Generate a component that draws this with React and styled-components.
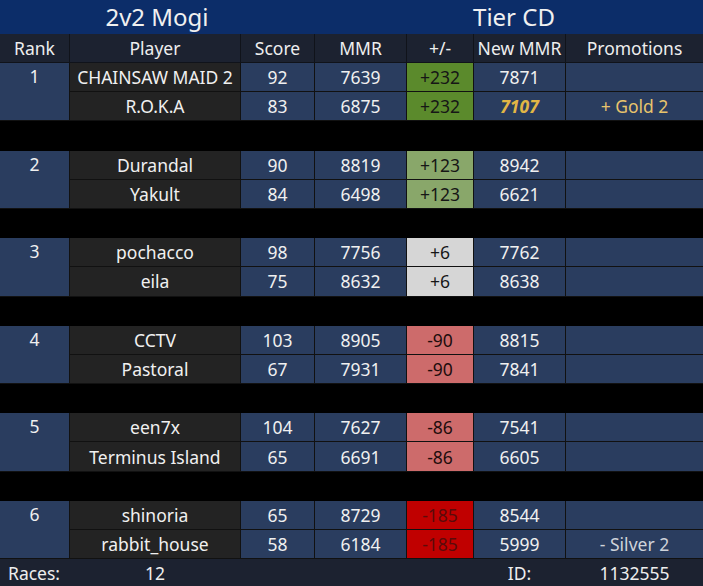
import React from 'react';
import styled, { createGlobalStyle } from 'styled-components';

const GlobalStyle = createGlobalStyle`
	html, body {
		margin: 0;
		padding: 0;
		background: #000;
	}
	body {
		font-family: 'Noto Sans', 'Open Sans', sans-serif;
	}
`;

const COLS = '69px 170px 73px 91px 66px 91px 137px';

const Page = styled.div`
	width: 703px;
	height: 586px;
	background: #000;
	display: flex;
	flex-direction: column;
	overflow: hidden;
	color: #ececec;
`;

const TitleBar = styled.div`
	height: 34px;
	flex-shrink: 0;
	background: #0c2d69;
	display: grid;
	grid-template-columns: 314px 389px;
	align-items: center;
	font-size: 24px;
	line-height: 34px;
	color: #f0f0f0;
`;

const Title = styled.div`
	text-align: center;
	padding-left: ${(p) => p.$shift || 0}px;
`;

const HeadRow = styled.div`
	display: grid;
	flex-shrink: 0;
	grid-template-columns: ${COLS};
	column-gap: 1px;
	background: #10131a;
	height: 28px;
	border-bottom: 1px solid #10131a;
`;

const HeadCell = styled.div`
	background: #1c2230;
	display: flex;
	align-items: center;
	justify-content: center;
	font-size: 17.5px;
	color: #eeeeee;
`;

const Body = styled.div`
	display: flex;
	flex-direction: column;
	gap: 29.2px;
	flex: 1;
`;

const Group = styled.div`
	display: grid;
	grid-template-columns: ${COLS};
	grid-template-rows: 28.2px 28.2px;
	gap: 1px;
	background: #111;
	border-bottom: 1px solid #111;
`;

const Cell = styled.div`
	display: flex;
	align-items: center;
	justify-content: center;
	font-size: 17.5px;
	white-space: nowrap;
	background: ${(p) => p.$bg || '#2a3d5f'};
	color: ${(p) => p.$color || '#f0f0f0'};
	font-weight: ${(p) => (p.$bold ? 700 : 400)};
	font-style: ${(p) => (p.$italic ? 'italic' : 'normal')};
`;

const RankCell = styled(Cell)`
	grid-row: span 2;
	align-items: flex-start;
	line-height: 27px;
`;

const Footer = styled.div`
	height: 27px;
	flex-shrink: 0;
	background: #1c2230;
	display: grid;
	grid-template-columns: ${COLS};
	column-gap: 1px;
	font-size: 17.5px;
	align-items: center;
	color: #eeeeee;
`;

const FootLabel = styled.div`
	padding-left: ${(p) => p.$pad || 0}px;
	text-align: ${(p) => p.$align || 'center'};
	grid-column: ${(p) => p.$col || 'auto'};
`;

const deltaStyle = {
	bigUp: { bg: '#5b8a2c', color: '#161616' },
	up: { bg: '#89a76a', color: '#161616' },
	flat: { bg: '#d6d6d6', color: '#161616' },
	down: { bg: '#cd6b6b', color: '#1e0d0d' },
	bigDown: { bg: '#c00000', color: '#5a0b0b' },
};

const groups = [
	{
		rank: 1,
		delta: '+232',
		kind: 'bigUp',
		players: [
			{ name: 'CHAINSAW MAID 2', score: 92, mmr: 7639, next: 7871 },
			{ name: 'R.O.K.A', score: 83, mmr: 6875, next: 7107, promo: '+ Gold 2', up: true },
		],
	},
	{
		rank: 2,
		delta: '+123',
		kind: 'up',
		players: [
			{ name: 'Durandal', score: 90, mmr: 8819, next: 8942 },
			{ name: 'Yakult', score: 84, mmr: 6498, next: 6621 },
		],
	},
	{
		rank: 3,
		delta: '+6',
		kind: 'flat',
		players: [
			{ name: 'pochacco', score: 98, mmr: 7756, next: 7762 },
			{ name: 'eila', score: 75, mmr: 8632, next: 8638 },
		],
	},
	{
		rank: 4,
		delta: '-90',
		kind: 'down',
		players: [
			{ name: 'CCTV', score: 103, mmr: 8905, next: 8815 },
			{ name: 'Pastoral', score: 67, mmr: 7931, next: 7841 },
		],
	},
	{
		rank: 5,
		delta: '-86',
		kind: 'down',
		players: [
			{ name: 'een7x', score: 104, mmr: 7627, next: 7541 },
			{ name: 'Terminus Island', score: 65, mmr: 6691, next: 6605 },
		],
	},
	{
		rank: 6,
		delta: '-185',
		kind: 'bigDown',
		players: [
			{ name: 'shinoria', score: 65, mmr: 8729, next: 8544 },
			{ name: 'rabbit_house', score: 58, mmr: 6184, next: 5999, promo: '- Silver 2' },
		],
	},
];

const headers = ['Rank', 'Player', 'Score', 'MMR', '+/-', 'New MMR', 'Promotions'];

const App = () => (
	<Page>
		<GlobalStyle />
		<TitleBar>
			<Title>2v2 Mogi</Title>
			<Title $shift={11}>Tier CD</Title>
		</TitleBar>
		<HeadRow>
			{headers.map((h) => (
				<HeadCell key={h}>{h}</HeadCell>
			))}
		</HeadRow>
		<Body>
			{groups.map((g) => {
				const d = deltaStyle[g.kind];
				return (
					<Group key={g.rank}>
						<RankCell>{g.rank}</RankCell>
						{g.players.map((p) => (
							<React.Fragment key={p.name}>
								<Cell $bg="#232323">{p.name}</Cell>
								<Cell>{p.score}</Cell>
								<Cell>{p.mmr}</Cell>
								<Cell $bg={d.bg} $color={d.color}>
									{g.delta}
								</Cell>
								<Cell
									$color={p.up ? '#e2b645' : undefined}
									$bold={p.up}
									$italic={p.up}
								>
									{p.next}
								</Cell>
								<Cell $color={p.up ? '#e8c46c' : '#cfd3da'}>{p.promo || ''}</Cell>
							</React.Fragment>
						))}
					</Group>
				);
			})}
		</Body>
		<Footer>
			<FootLabel $align="left" $pad={8}>Races:</FootLabel>
			<FootLabel>12</FootLabel>
			<FootLabel $col="6">ID:</FootLabel>
			<FootLabel $col="7">1132555</FootLabel>
		</Footer>
	</Page>
);

export default App;
